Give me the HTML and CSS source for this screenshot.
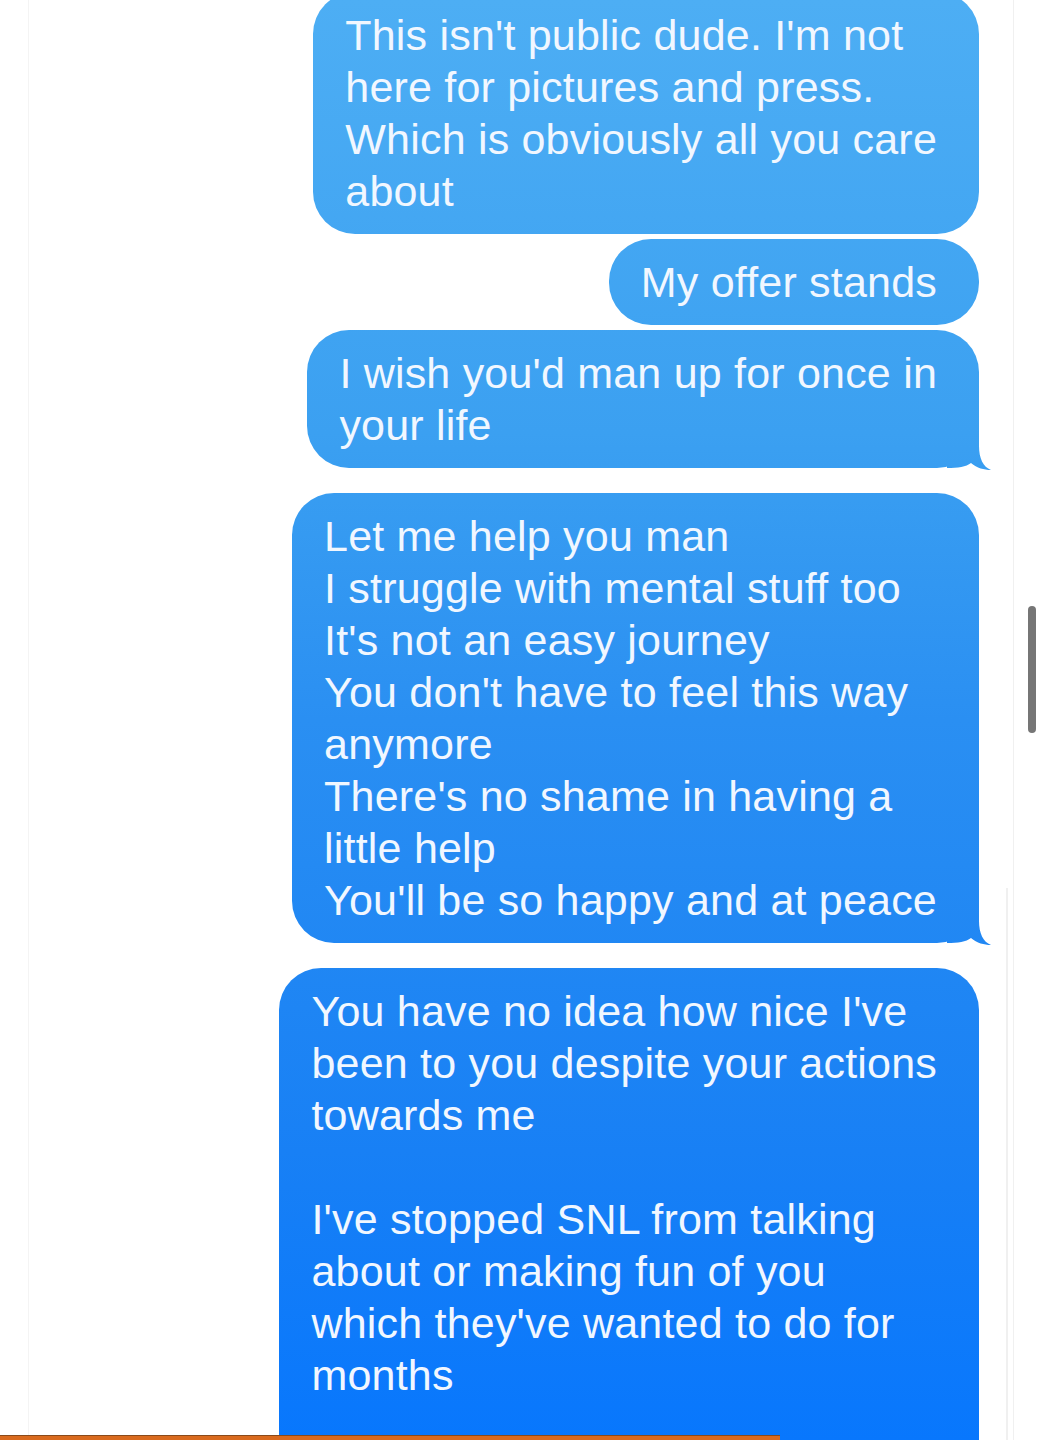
FILE: index.html
```html
<!DOCTYPE html>
<html lang="en">
<head>
    <meta charset="UTF-8">
    <meta name="viewport" content="width=device-width, initial-scale=1.0">
    <title>Messages</title>
    <link rel="stylesheet" href="styles.css">
</head>
<body>
    <div class="screen">
        <div class="thread">
            <div class="bubble">This isn't public dude. I'm not<br>here for pictures and press.<br>Which is obviously all you care<br>about</div>
            <div class="bubble close">My offer stands</div>
            <div class="bubble close tail">I wish you'd man up for once in<br>your life</div>
            <div class="bubble far tail">Let me help you man<br>I struggle with mental stuff too<br>It's not an easy journey<br>You don't have to feel this way<br>anymore<br>There's no shame in having a<br>little help<br>You'll be so happy and at peace</div>
            <div class="bubble far last">You have no idea how nice I've<br>been to you despite your actions<br>towards me<br><br>I've stopped SNL from talking<br>about or making fun of you<br>which they've wanted to do for<br>months</div>
        </div>
    </div>

    <div class="scroll-track"></div>
    <div class="scroll-thumb"></div>
    <div class="progress"></div>
</body>
</html>
```

FILE: styles.css
```css
body {
    margin: 0;
    height: 1440px;
    overflow: hidden;
    background-color: #fff;
    font-family: 'Liberation Sans', Arial, sans-serif;
}

.screen {
    margin-left: 28px;
    width: 984px;
    height: 1440px;
    border-left: 1px solid #f4f4f4;
    border-right: 1px solid #f0f0f0;
    overflow: hidden;
}

.thread {
    display: flex;
    flex-direction: column;
    align-items: flex-end;
    padding-right: 34px;
    margin-top: -8px;
}

.bubble {
    position: relative;
    padding: 17px 42px 17px 32px;
    border-radius: 42px;
    font-size: 43px;
    letter-spacing: 0.2px;
    line-height: 52px;
    color: #f1f7ff;
    white-space: nowrap;
    background: linear-gradient(#4daef4, #3ba0f1 30%, #2a8ff2 50%, #1880f5 80%, #0877fd) fixed;
}

.bubble.close {
    margin-top: 5px;
}

.bubble.far {
    margin-top: 25px;
}

.bubble.last {
    padding-bottom: 80px;
}

/* tail at the lower right corner */
.bubble.tail::before {
    content: "";
    position: absolute;
    bottom: -2px;
    right: -12px;
    width: 44px;
    height: 46px;
    background: linear-gradient(#4daef4, #3ba0f1 30%, #2a8ff2 50%, #1880f5 80%, #0877fd) fixed;
    clip-path: path('M0 0 H32 V22 C32 34 36 43 44 46 C37 46 30 44 24 39 C19 43 11 44 0 44 Z');
}

.scroll-track {
    position: absolute;
    left: 1006px;
    top: 888px;
    width: 2px;
    height: 560px;
    background-color: #f0f0f0;
}

.scroll-thumb {
    position: absolute;
    left: 1028px;
    top: 606px;
    width: 8px;
    height: 127px;
    border-radius: 4px;
    background-color: #767676;
}

.progress {
    position: absolute;
    left: 0;
    top: 1435px;
    width: 780px;
    height: 5px;
    background-color: #d96a1e;
    border-top: 1px solid #8a4a1a;
}
```
